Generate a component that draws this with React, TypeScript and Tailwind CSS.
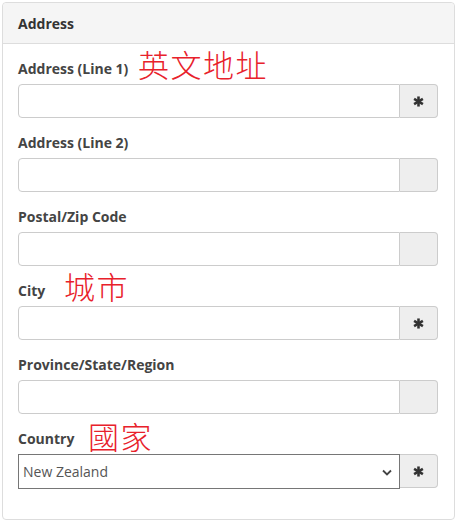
import React from "react";

const labelFont = { fontFamily: '"Open Sans", "Liberation Sans", sans-serif' };

function Star() {
  return (
    <svg width="11" height="11" viewBox="0 0 12 12" aria-hidden="true">
      <g stroke="#333" strokeWidth="2.8" strokeLinecap="butt">
        <line x1="6" y1="0.5" x2="6" y2="11.5" />
        <line x1="1.2" y1="3.2" x2="10.8" y2="8.8" />
        <line x1="1.2" y1="8.8" x2="10.8" y2="3.2" />
      </g>
    </svg>
  );
}

function Addon({ required }: { required?: boolean }) {
  return (
    <span className="flex h-[34px] w-[38px] shrink-0 items-center justify-center rounded-r-[4px] border border-l-0 border-[#ccc] bg-[#eee]">
      {required && <Star />}
    </span>
  );
}

// red annotations drawn over the form
function Note({ text, left, top }: { text: string; left: number; top: number }) {
  return (
    <span
      className="pointer-events-none absolute whitespace-nowrap text-[31px] font-light leading-none tracking-[1.5px] text-[#e8212b]"
      style={{ left, top, fontFamily: '"Noto Sans CJK TC", "Noto Sans CJK SC", sans-serif' }}
    >
      {text}
    </span>
  );
}

type Field = { label: string; required?: boolean; note?: { text: string; left: number; top: number } };

const fields: Field[] = [
  { label: "Address (Line 1)", required: true, note: { text: "英文地址", left: 120, top: -11 } },
  { label: "Address (Line 2)" },
  { label: "Postal/Zip Code" },
  { label: "City", required: true, note: { text: "城市", left: 46, top: -11 } },
  { label: "Province/State/Region" },
];

export default function App() {
  return (
    <div className="bg-white pl-[2px] pt-[2px]" style={labelFont}>
      <div className="w-[453px] rounded-[4px] border border-[#ddd] bg-white">
        <div className="flex h-[41px] items-center rounded-t-[4px] border-b border-[#ddd] bg-[#f5f5f5] px-[15px] text-[14px] font-bold text-[#333]">
          Address
        </div>
        <div className="flex flex-col gap-[15px] pb-[30px] pl-[15px] pr-[16px] pt-[15px]">
          {fields.map((f) => (
            <div key={f.label}>
              <div className="relative mb-[5px] h-[20px] text-[14px] font-bold leading-[20px] text-[#444]">
                {f.label}
                {f.note && <Note {...f.note} />}
              </div>
              <div className="flex">
                <input
                  type="text"
                  className="h-[34px] flex-1 rounded-l-[4px] border border-[#ccc] bg-white px-3 text-[14px] outline-none"
                />
                <Addon required={f.required} />
              </div>
            </div>
          ))}
          <div>
            <div className="relative mb-[5px] h-[20px] text-[14px] font-bold leading-[20px] text-[#444]">
              Country
              <Note text="國家" left={70} top={-9} />
            </div>
            <div className="flex">
              <div className="relative flex h-[35px] flex-1 items-center border border-[#767676] bg-white pl-[4px] text-[14px] text-[#555]">
                New Zealand
                <svg
                  className="absolute right-[7px] top-[14px]"
                  width="10"
                  height="7"
                  viewBox="0 0 10 7"
                  aria-hidden="true"
                >
                  <path d="M1 1.5 L5 5.5 L9 1.5" fill="none" stroke="#444" strokeWidth="1.8" />
                </svg>
              </div>
              <Addon required />
            </div>
          </div>
        </div>
      </div>
    </div>
  );
}
